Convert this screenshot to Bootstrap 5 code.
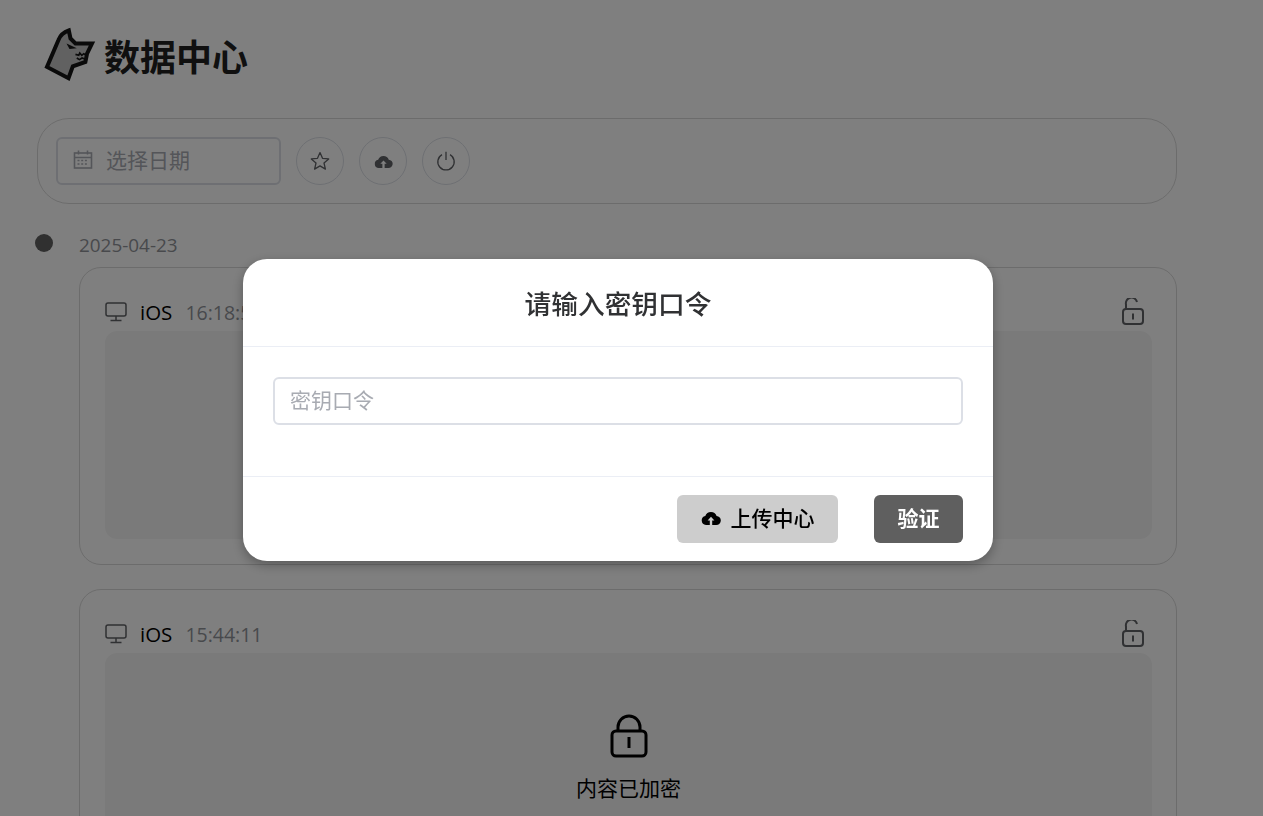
<!DOCTYPE html>
<html lang="zh">
<head>
<meta charset="utf-8">
<title>数据中心</title>
<link href="https://cdn.jsdelivr.net/npm/bootstrap@5.3.0/dist/css/bootstrap.min.css" rel="stylesheet">
<style>
html,body{height:816px;overflow:hidden;background:#fff}
body{font-family:"Open Sans","Noto Sans CJK SC",sans-serif;color:#000;font-size:18px}
.shell{width:1236px;padding:27px 59px 0 37px}
.brand{height:53px;margin:0 0 38px 6px;gap:8px}
.brand h1{font-size:36px;font-weight:700;margin:0;line-height:57px;color:#212121;font-family:"Noto Sans CJK SC",sans-serif}
.toolbar{height:86px;border:1px solid #d9d9d9;border-radius:32px;padding:18px;gap:15px;margin-bottom:29px}
.datebox{width:225px;height:48px;border:2px solid #dcdfe6;border-radius:6px;padding:0 0 2px 15px;gap:13px;color:#a8abb2;font-size:21px;font-family:"Noto Sans CJK SC",sans-serif}
.roundbtn{width:48px;height:48px;border:1px solid #dcdfe6;border-radius:50%;background:#fff;color:#606266;padding:0}
.tline{position:relative;padding-left:42px}
.tdot{position:absolute;left:-2px;top:1px;width:18px;height:18px;border-radius:50%;background:#606060}
.tdate{font-size:18.900px;line-height:24px;color:#909399;height:24px;margin-bottom:10px}
.entry{height:298px;border:1px solid #d9d9d9;border-radius:22px;padding:25px 24px 25px 25px;margin-bottom:24px;background:#fff}
.entry-head{height:38px;gap:13px;line-height:29px}
.osname{font-size:20.500px;color:#000}
.ostime{font-size:19.500px;color:#909399}
.lockopen{margin-right:7px}
.locked{height:208px;padding-top:3px;background:#f5f5f5;border-radius:12px;gap:14px;font-size:21px;color:#000;font-family:"Noto Sans CJK SC",sans-serif}
.veil{position:fixed;inset:0;background:rgba(0,0,0,.5);padding:259px 27px 0 0}
.dlg{width:750px;height:302px;background:#fff;border-radius:24px;box-shadow:0 4px 12px rgba(0,0,0,.3);font-family:"Noto Sans CJK SC",sans-serif}
.dlg-head{height:88px;padding-top:1px;border-bottom:1px solid #ebeef5;font-size:26.700px;color:#303133;font-weight:500}
.dlg-body{height:130px;padding:30px;border-bottom:1px solid #ebeef5}
.dlg-input{height:48px;border:2px solid #dcdfe6;border-radius:6px;font-size:21px;padding:0 15px 5px;color:#303133}
.dlg-input::placeholder{color:#a8abb2}
.dlg-foot{height:84px;padding:18px 30px;gap:36px}
.btn-up{width:161px;height:48px;padding:0 0 2px;background:#cdcdcd;border:0;border-radius:6px;font-size:21px;color:#000;gap:10px;font-weight:500}
.btn-ok{width:89px;height:48px;padding:0 0 2px;background:#5f5f5f;border:0;border-radius:6px;font-size:21px;color:#fff;font-weight:700}
</style>
</head>
<body>
<div class="shell">
  <div class="brand d-flex align-items-start">
    <svg width="53" height="55" viewBox="70 50 160 165"><path d="M148 60 153 84 168 99 218 99 203 130 198 155 160 168 147 204 82 170 117 88Q125 68 148 60Z" fill="#c2c2c2" stroke="#141414" stroke-width="12" stroke-linejoin="miter"/><path d="M141 99 172 114 150 116Z" fill="#141414"/><path d="M168 132 178 135 181 128 187 135 193 130 199 134M172 143 180 148 188 143 196 146" fill="none" stroke="#141414" stroke-width="5"/></svg>
    <h1>数据中心</h1>
  </div>
  <div class="toolbar d-flex align-items-center">
    <div class="datebox d-flex align-items-center">
      <svg width="20" height="20" viewBox="0 0 20 20" fill="none" stroke="#a8abb2" stroke-width="1.6"><rect x="1.500" y="3" width="17" height="15"/><path d="M1.500 7.500h17M5.500 .5v4M14.500 .5v4"/><path d="M4.500 10.500h11M4.500 14h11" stroke-dasharray="2 1.700"/></svg>
      <span>选择日期</span>
    </div>
    <button class="roundbtn d-flex align-items-center justify-content-center" type="button" aria-label="收藏"><svg width="20" height="20" viewBox="0 0 20 20" fill="none" stroke="#606266" stroke-width="1.300" stroke-linejoin="round"><path d="M10 1.600 12.500 7.300 18.700 7.900 14 12 15.400 18.100 10 14.900 4.600 18.100 6 12 1.300 7.900 7.500 7.300Z"/></svg></button>
    <button class="roundbtn d-flex align-items-center justify-content-center" type="button" aria-label="上传"><svg width="19" height="15" viewBox="0 0 20 16"><path d="M5 15A4.500 4.500 0 0 1 4.300 6.100 6 6 0 0 1 15.600 6 4.500 4.500 0 0 1 15 15H11.200V10.500H13.400L10 6.800 6.600 10.500H8.800V15Z" fill="#606266"/></svg></button>
    <button class="roundbtn d-flex align-items-center justify-content-center" type="button" aria-label="退出"><svg width="20" height="20" viewBox="0 0 20 20" fill="none" stroke="#606266" stroke-width="1.300"><path d="M6 3.600A8.200 8.200 0 1 0 14 3.600M10 .8V9"/></svg></button>
  </div>
  <div class="tline">
    <span class="tdot"></span>
    <div class="tdate">2025-04-23</div>
    <div class="entry">
      <div class="entry-head d-flex align-items-center">
        <svg width="22" height="20" viewBox="0 0 22 20" fill="none" stroke="#606266" stroke-width="1.500"><rect x="1" y="1" width="20" height="13" rx="2"/><path d="M11 14v4M5.500 18.500h11"/></svg>
        <span class="osname">iOS</span><span class="ostime">16:18:52</span>
        <svg class="ms-auto lockopen" width="24" height="28" viewBox="0 0 24 28" fill="none" stroke="#606266" stroke-width="2"><rect x="2" y="11" width="20" height="15" rx="3"/><path d="M5 11V6.500A5.500 5.500 0 0 1 16 4M12 15.500v6"/></svg>
      </div>
      <div class="locked d-flex flex-column align-items-center justify-content-center">
        <svg width="38" height="44" viewBox="0 0 38 44" fill="none" stroke="#000" stroke-width="3"><rect x="2" y="17" width="34" height="25" rx="4"/><path d="M8 17V13A11 11 0 0 1 30 13V17M19 23v11"/></svg>
        <span>内容已加密</span>
      </div>
    </div>
    <div class="entry">
      <div class="entry-head d-flex align-items-center">
        <svg width="22" height="20" viewBox="0 0 22 20" fill="none" stroke="#606266" stroke-width="1.500"><rect x="1" y="1" width="20" height="13" rx="2"/><path d="M11 14v4M5.500 18.500h11"/></svg>
        <span class="osname">iOS</span><span class="ostime">15:44:11</span>
        <svg class="ms-auto lockopen" width="24" height="28" viewBox="0 0 24 28" fill="none" stroke="#606266" stroke-width="2"><rect x="2" y="11" width="20" height="15" rx="3"/><path d="M5 11V6.500A5.500 5.500 0 0 1 16 4M12 15.500v6"/></svg>
      </div>
      <div class="locked d-flex flex-column align-items-center justify-content-center">
        <svg width="38" height="44" viewBox="0 0 38 44" fill="none" stroke="#000" stroke-width="3"><rect x="2" y="17" width="34" height="25" rx="4"/><path d="M8 17V13A11 11 0 0 1 30 13V17M19 23v11"/></svg>
        <span>内容已加密</span>
      </div>
    </div>
  </div>
</div>
<div class="veil d-flex justify-content-center align-items-start">
  <div class="dlg">
    <div class="dlg-head d-flex align-items-center justify-content-center">请输入密钥口令</div>
    <div class="dlg-body"><input class="dlg-input form-control shadow-none" type="text" placeholder="密钥口令"></div>
    <div class="dlg-foot d-flex justify-content-end">
      <button class="btn-up d-flex align-items-center justify-content-center" type="button"><svg width="20" height="16" viewBox="0 0 20 16"><path d="M5 15A4.500 4.500 0 0 1 4.300 6.100 6 6 0 0 1 15.600 6 4.500 4.500 0 0 1 15 15H11.200V10.500H13.400L10 6.800 6.600 10.500H8.800V15Z" fill="#000"/></svg><span>上传中心</span></button>
      <button class="btn-ok" type="button">验证</button>
    </div>
  </div>
</div>
</body>
</html>
